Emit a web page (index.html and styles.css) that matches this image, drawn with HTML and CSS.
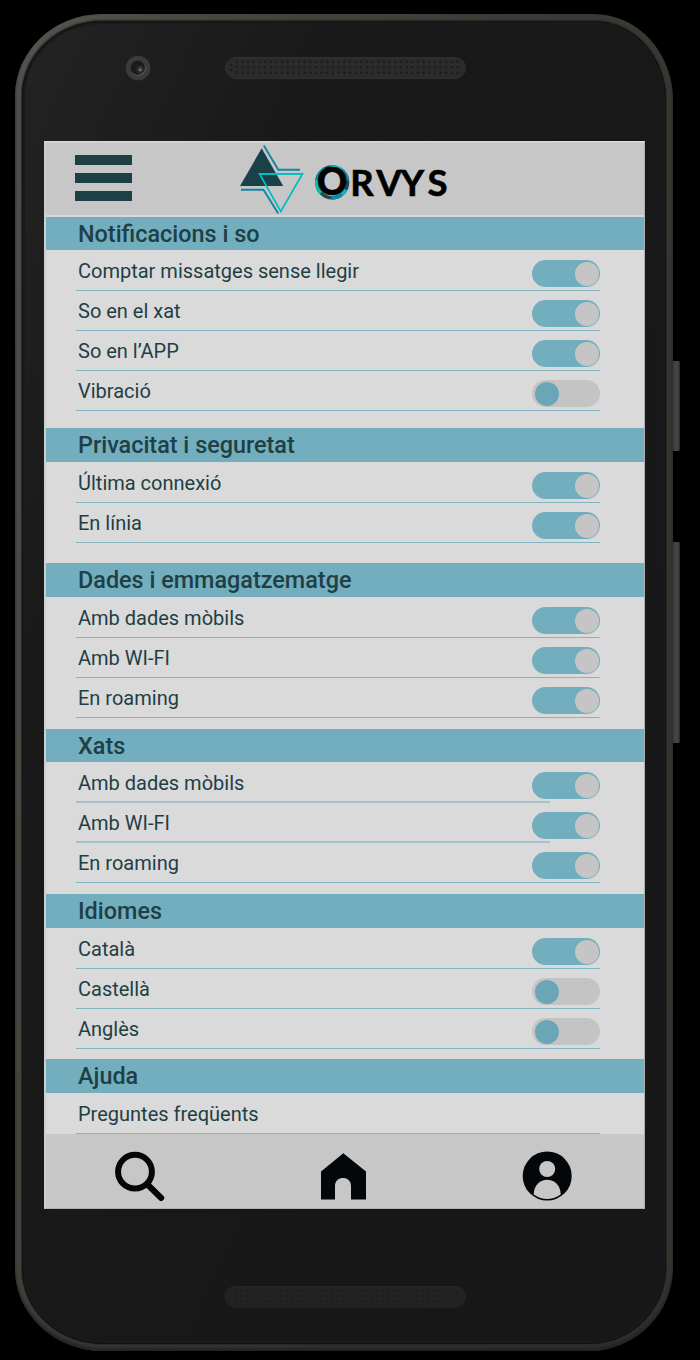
FILE: index.html
```
<!DOCTYPE html>
<html lang="ca">
<head>
<meta charset="utf-8">
<title>ORVYS</title>
<link rel="stylesheet" href="styles.css">
</head>
<body>
<div class="phone">
  <span class="side-button power"></span>
  <span class="side-button volume"></span>
  <div class="face">
    <div class="top-bezel">
      <svg class="camera" viewBox="0 0 26 26"><circle cx="13" cy="13" r="12.3" fill="#3a3c3c"/><circle cx="13.4" cy="13.2" r="7.5" fill="#5b5d5d"/><circle cx="12.8" cy="12.7" r="7.2" fill="#1d1b1e"/><circle cx="15" cy="14.5" r="3.5" fill="#353036"/><circle cx="15.2" cy="14.8" r="1.4" fill="#8a6468"/></svg>
      <svg class="speaker" viewBox="0 0 242 22"><defs><pattern id="dots" x="9" y="2" width="5.66" height="5.5" patternUnits="userSpaceOnUse"><circle cx="2.8" cy="2.75" r="1.3" fill="#1c1c1c"/></pattern></defs><rect x=".5" y=".5" width="240" height="21" rx="10.5" fill="#2b2b2b" stroke="#303030"/><rect x="9" y="2" width="226" height="16.5" fill="url(#dots)"/><g fill="#1c1c1c"><circle cx="6" cy="8" r="1.3"/><circle cx="6" cy="13" r="1.3"/></g></svg>
    </div>
    <div class="screen">
      <header class="app-header">
        <div class="menu"><i></i><i></i><i></i></div>
        <svg class="logo" viewBox="238 143 216 72">
          <path d="M261.7 148.2 283.2 186H240z" fill="#1b4148"/>
          <path d="M263.8 145.5 278.3 169.8H300M241 189.7H263.5L278.2 213.6" fill="none" stroke="#0f87a8" stroke-width="1.9"/>
          <path d="M259.6 174H302.4L280.8 211.5z" fill="none" stroke="#08bcc0" stroke-width="1.8"/>
          <circle cx="332.2" cy="182.4" r="15.4" fill="none" stroke="#1b4b54" stroke-width="3.4"/>
          <circle cx="332.2" cy="182.4" r="15.4" fill="none" stroke="#08bcc0" stroke-width="3.4" pathLength="100" stroke-dasharray="13 22 10 20 15 20" stroke-dashoffset="27"/>
          <circle cx="332.2" cy="182.4" r="15.4" fill="none" stroke="#0f87a8" stroke-width="3.4" pathLength="100" stroke-dasharray="12 16 12 27 14 19" stroke-dashoffset="14"/>
          <text class="wordmark"><tspan class="wordmark-o" x="332.2" y="195.3">O</tspan><tspan x="350.2 376.2 400.6 427.6" y="195.6">RVYS</tspan></text>
        </svg>
      </header>
      <main class="settings">
        <section class="group notifications"><h2>Notificacions i so</h2><ul>
          <li><span>Comptar missatges sense llegir</span><b class="toggle on"></b></li>
          <li><span>So en el xat</span><b class="toggle on"></b></li>
          <li><span>So en l’APP</span><b class="toggle on"></b></li>
          <li><span>Vibració</span><b class="toggle"></b></li></ul></section>
        <section class="group privacy"><h2>Privacitat i seguretat</h2><ul>
          <li><span>Última connexió</span><b class="toggle on"></b></li>
          <li><span>En línia</span><b class="toggle on"></b></li></ul></section>
        <section class="group data"><h2>Dades i emmagatzematge</h2><ul>
          <li><span>Amb dades mòbils</span><b class="toggle on"></b></li>
          <li><span>Amb WI-FI</span><b class="toggle on"></b></li>
          <li><span>En roaming</span><b class="toggle on"></b></li></ul></section>
        <section class="group chats"><h2>Xats</h2><ul>
          <li class="short"><span>Amb dades mòbils</span><b class="toggle on"></b></li>
          <li class="short"><span>Amb WI-FI</span><b class="toggle on"></b></li>
          <li><span>En roaming</span><b class="toggle on"></b></li></ul></section>
        <section class="group languages"><h2>Idiomes</h2><ul>
          <li><span>Català</span><b class="toggle on"></b></li>
          <li><span>Castellà</span><b class="toggle"></b></li>
          <li><span>Anglès</span><b class="toggle"></b></li></ul></section>
        <section class="group help"><h2>Ajuda</h2><ul>
          <li><span>Preguntes freqüents</span></li></ul></section>
      </main>
      <nav class="tabs">
        <svg viewBox="113 1150 52 52"><circle cx="135" cy="1171.7" r="16.9" fill="none" stroke="#030709" stroke-width="6"/><path d="M148.5 1185.5 161.2 1198" stroke="#030709" stroke-width="6" stroke-linecap="round"/></svg>
        <svg viewBox="317 1150 52 52"><path d="M343.3 1153.2 366 1171.4V1199.5H351V1186C351 1175.4 335 1175.4 335 1186V1199.5H321V1171.4z" fill="#030709"/></svg>
        <svg viewBox="521 1150 52 52"><circle cx="547.2" cy="1176" r="24.5" fill="#030709"/><circle cx="547.2" cy="1169" r="8" fill="#c7c7c7"/><path d="M533.7 1194.5C534 1174.8 560.4 1174.8 560.7 1194.5Q547.2 1203.5 533.7 1194.5z" fill="#c7c7c7"/></svg>
      </nav>
    </div>
    <div class="bottom-bezel">
      <svg class="speaker" viewBox="0 0 242 22"><rect x="1" y=".5" width="240.5" height="20.5" rx="10.2" fill="#222" stroke="#272727"/><rect x="9" y="2" width="226" height="16.5" fill="url(#dots)" opacity=".8"/></svg>
    </div>
  </div>
</div>
</body>
</html>
```

FILE: styles.css
```
* { box-sizing: border-box; }
body { margin: 0; height: 1360px; padding: 14px 27px 9px 15px; background: #000; font-family: Roboto, "Liberation Sans", sans-serif; color: #1e4045; }
.phone { position: relative; width: 658px; height: 1337px; padding: 7px; border-radius: 87px 79px 84px 88px / 82px 86px 84px 82px; background: linear-gradient(100deg, #555551 0, #464640 25%, #3a3b36 60%, #353630 100%); box-shadow: inset 0 -4px 4px #222; }
.face { height: 1323px; border-radius: 80px 72px 77px 81px / 75px 79px 77px 75px; background: linear-gradient(115deg, #232323 0, #191919 25%, #171717 100%); box-shadow: 0 0 2px 1px #252624, inset 0 0 0 1px #121212, inset 0 0 0 3px #1a1a1a; }
.side-button { position: absolute; left: 658px; width: 6.5px; background: linear-gradient(90deg, #3c3a3b, #4a464a 60%, #292729); border-radius: 0 1px 1px 0; }
.power { top: 347px; height: 90px; }
.volume { top: 528px; height: 201px; }
.top-bezel { height: 120px; padding: 34px 0 0 103px; display: flex; align-items: flex-start; gap: 74px; }
.camera { width: 26px; height: 26px; }
.speaker { width: 242px; height: 22px; margin-top: 2px; }
.bottom-bezel { padding: 75px 0 0 202px; }
.screen { width: 601px; height: 1068px; margin-left: 22px; border: 1px solid #b0b0b0; border-top-color: #dadada; border-left: 2px solid #cecece; background: #dadada; display: flex; flex-direction: column; }
.app-header { height: 75px; flex: none; display: flex; align-items: flex-start; padding: 1px 0 0 29px; background: #c7c7c7; border-bottom: 2px solid #d8d8d8; border-top: 1px solid #d0d0d0; }
.menu { width: 57px; display: grid; gap: 8px; margin: 11px 106px 0 0; }
.menu i { height: 10px; background: #1e4045; }
.logo { width: 216px; height: 72px; margin-top: -1px; }
.wordmark { font: 700 36.5px Lato, sans-serif; fill: #000; stroke: #000; stroke-width: .6px; }
.wordmark-o { font-size: 37.5px; font-weight: 900; text-anchor: middle; }
.settings { height: 917px; flex: none; overflow: hidden; }
.group { height: 165px; }
.notifications { height: 211px; }
.privacy { height: 135px; }
.data { height: 166px; }
.help { height: 76px; }
h2 { height: 34px; margin: 0; padding-left: 32px; background: #73aebf; font-size: 23.4px; font-weight: 500; line-height: 34px; }
.notifications h2, .chats h2 { height: 33px; line-height: 34px; }
ul { margin: 0 44px 0 30px; padding: 1px 0 0; list-style: none; }
li { height: 40px; padding-left: 2px; border-bottom: 1px solid #82b4c2; display: flex; justify-content: space-between; font-size: 20px; line-height: 40px; }
.short { border: 0; background: linear-gradient(#a0c3cc, #a0c3cc) 0 100% / 474px 2px no-repeat; }
.toggle { width: 68px; height: 27px; margin-top: 9px; padding: 1.5px; border-radius: 14px; background: #c4c4c4; }
.toggle::before { content: ""; display: block; width: 24px; height: 24px; margin-left: 1.5px; border-radius: 50%; background: #6ba6b7; }
.toggle.on { background: #73aebf; }
.toggle.on::before { margin-left: 41.3px; background: #c5c5c5; }
.tabs { flex: 1; display: flex; gap: 152px; padding: 16px 0 0 67px; background: #c7c7c7; }
.tabs svg { width: 52px; height: 52px; }
```
